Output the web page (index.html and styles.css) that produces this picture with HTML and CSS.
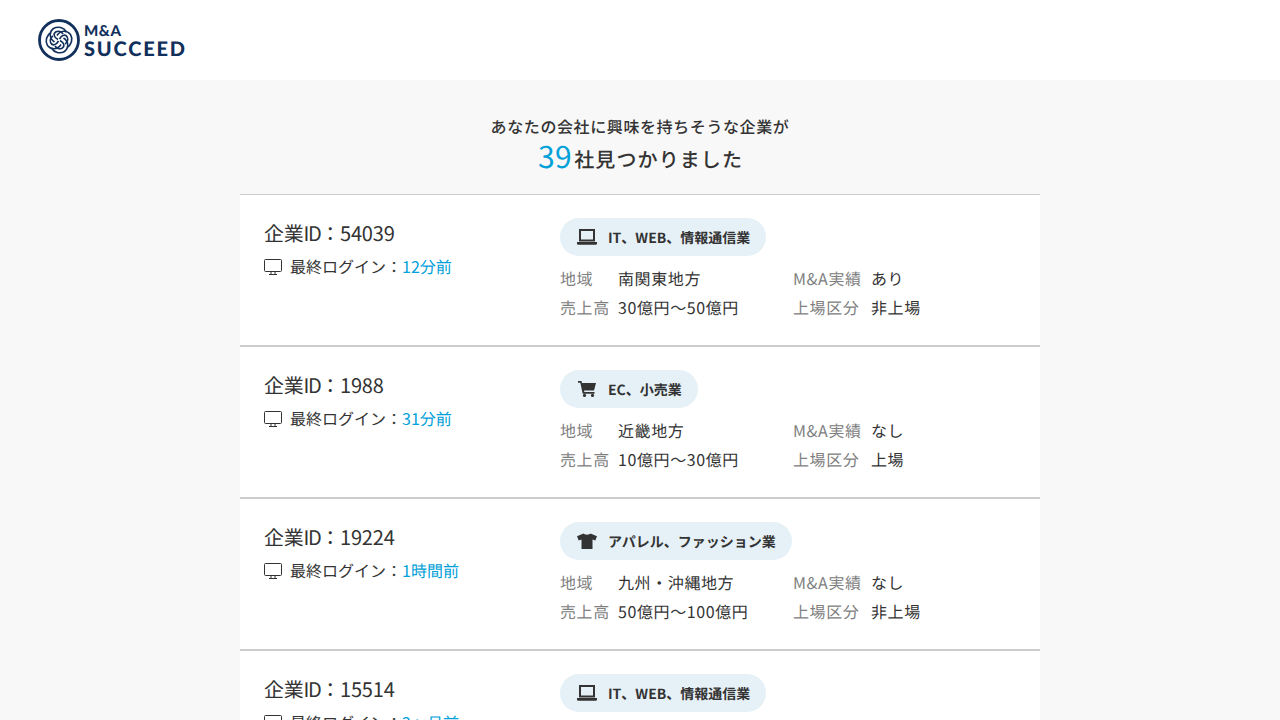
FILE: index.html
```html
<!DOCTYPE html>
<html lang="ja">
<head>
<meta charset="utf-8">
<title>M&amp;A SUCCEED</title>
<link rel="stylesheet" href="styles.css">
</head>
<body>
<svg class="sprites" width="0" height="0" aria-hidden="true">
  <symbol id="i-monitor" viewBox="0 0 18 16"><path d="M1.500.500h15a1 1 0 0 1 1 1v10a1 1 0 0 1-1 1h-15a1 1 0 0 1-1-1v-10a1 1 0 0 1 1-1zM7 12.500v2.500M11 12.500v2.500M5 15.500h8" fill="none" stroke="#333" stroke-width="1"/></symbol>
  <symbol id="i-laptop" viewBox="0 0 20 16"><path d="M3 1h14v10.500H3z" fill="none" stroke="#333" stroke-width="2"/><path d="M0 13h20v1.400a1.300 1.300 0 0 1-1.300 1.300H1.300A1.300 1.300 0 0 1 0 14.400z" fill="#333"/></symbol>
  <symbol id="i-cart" viewBox="0 0 20 16"><path d="M1 0h3.500l.5 2H19l-2 7.500H7l.4 1.500H17.500v1.800H5.700L3.300 1.800H1z" fill="#333"/><circle cx="7.500" cy="14.400" r="1.600" fill="#333"/><circle cx="15.500" cy="14.400" r="1.600" fill="#333"/></symbol>
  <symbol id="i-shirt" viewBox="0 0 20 16"><path d="M6.500 0.500C7.500 2 12.500 2 13.500 0.500L20 3.200 18.300 7.500 15.500 6.600V16H4.500V6.600L1.700 7.500 0 3.200z" fill="#333"/></symbol>
</svg>

<header class="site-header">
  <a class="logo" href="#">
    <svg class="logo-mark" width="44" height="44" viewBox="0 0 44 44" aria-hidden="true">
      <g fill="none" stroke="#12305c">
        <circle cx="22" cy="22" r="19.500" stroke-width="2.800"/>
        <g stroke-width="1.600">
          <g id="arm">
            <path d="M17.500 24C12 20.500 12 14 16.500 10.500C21 7.800 27 9.500 29.500 14"/>
            <path d="M21 21.500C16.500 19 16 15.500 19 13.800C21.500 12.600 24.500 13.400 26 16"/>
          </g>
          <use href="#arm" transform="rotate(90 22 22)"/>
          <use href="#arm" transform="rotate(180 22 22)"/>
          <use href="#arm" transform="rotate(270 22 22)"/>
        </g>
      </g>
    </svg>
    <span class="logo-text">
      <span class="logo-small">M&amp;A</span>
      <span class="logo-big">SUCCEED</span>
    </span>
  </a>
</header>

<main class="main">
  <div class="heading">
    <p class="heading-sub">あなたの会社に興味を持ちそうな企業が</p>
    <p class="heading-main"><span class="count">39</span>社見つかりました</p>
  </div>

  <section class="list">
    <article class="card">
      <div class="card-left">
        <h2 class="company">企業<span class="id">ID</span>：54039</h2>
        <p class="login"><svg class="login-icon"><use href="#i-monitor"/></svg>最終ログイン：<span class="accent">12分前</span></p>
      </div>
      <div class="card-right">
        <div class="tag"><svg class="tag-icon"><use href="#i-laptop"/></svg>IT、WEB、情報通信業</div>
        <dl class="facts">
          <dt>地域</dt><dd>南関東地方</dd><dt>M&amp;A実績</dt><dd>あり</dd>
          <dt>売上高</dt><dd>30億円〜50億円</dd><dt>上場区分</dt><dd>非上場</dd>
        </dl>
      </div>
    </article>

    <article class="card">
      <div class="card-left">
        <h2 class="company">企業<span class="id">ID</span>：1988</h2>
        <p class="login"><svg class="login-icon"><use href="#i-monitor"/></svg>最終ログイン：<span class="accent">31分前</span></p>
      </div>
      <div class="card-right">
        <div class="tag"><svg class="tag-icon"><use href="#i-cart"/></svg>EC、小売業</div>
        <dl class="facts">
          <dt>地域</dt><dd>近畿地方</dd><dt>M&amp;A実績</dt><dd>なし</dd>
          <dt>売上高</dt><dd>10億円〜30億円</dd><dt>上場区分</dt><dd>上場</dd>
        </dl>
      </div>
    </article>

    <article class="card">
      <div class="card-left">
        <h2 class="company">企業<span class="id">ID</span>：19224</h2>
        <p class="login"><svg class="login-icon"><use href="#i-monitor"/></svg>最終ログイン：<span class="accent">1時間前</span></p>
      </div>
      <div class="card-right">
        <div class="tag"><svg class="tag-icon"><use href="#i-shirt"/></svg>アパレル、ファッション業</div>
        <dl class="facts">
          <dt>地域</dt><dd>九州・沖縄地方</dd><dt>M&amp;A実績</dt><dd>なし</dd>
          <dt>売上高</dt><dd>50億円〜100億円</dd><dt>上場区分</dt><dd>非上場</dd>
        </dl>
      </div>
    </article>

    <article class="card">
      <div class="card-left">
        <h2 class="company">企業<span class="id">ID</span>：15514</h2>
        <p class="login"><svg class="login-icon"><use href="#i-monitor"/></svg>最終ログイン：<span class="accent">2ヶ月前</span></p>
      </div>
      <div class="card-right">
        <div class="tag"><svg class="tag-icon"><use href="#i-laptop"/></svg>IT、WEB、情報通信業</div>
      </div>
    </article>
  </section>
</main>
</body>
</html>
```

FILE: styles.css
```css
* { box-sizing: border-box; }
html, body { margin: 0; height: 720px; overflow: hidden; }
body {
  background: #f8f8f8;
  color: #333;
  font-family: "Noto Sans CJK JP", "Noto Sans", sans-serif;
  text-rendering: geometricPrecision;
}
.sprites { display: block; height: 0; }
.site-header { height: 80px; background: #fff; display: flex; align-items: center; padding-left: 37px; }
.logo { display: flex; align-items: center; gap: 3px; text-decoration: none; color: #12305c; }
.logo-mark { display: block; }
.logo-text { display: flex; flex-direction: column; font-family: Lato, sans-serif; font-weight: 900; padding-top: 2px; }
.logo-small { font-size: 15px; line-height: 17px; letter-spacing: .4px; }
.logo-big { font-size: 20px; line-height: 19px; letter-spacing: 1.800px; }
.main { width: 800px; margin: 0 auto; }
.heading { height: 114px; padding-top: 34px; text-align: center; }
.heading p { margin: 0; }
.heading-sub { font-size: 16px; line-height: 24px; font-weight: 500; letter-spacing: .6px; }
.heading .heading-main { margin-top: 1px; font-size: 20px; line-height: 32px; font-weight: 500; letter-spacing: 1.100px; padding-left: 1px; }
.count { font-size: 30px; font-weight: 400; color: #00a0d9; letter-spacing: .5px; margin-right: 2px; vertical-align: -1px; }
.list { border-top: 1px solid #ccc; }
.card { display: flex; height: 152px; background: #fff; border-bottom: 2px solid #ccc; padding: 24px 0 0 24px; }
.card-left { width: 296px; }
.company { margin: -1px 0 0; font-size: 20px; line-height: 30px; font-weight: 400; letter-spacing: -.2px; }
.id { letter-spacing: -1.500px; }
.login { margin: 6px 0 0; font-size: 16px; line-height: 24px; display: flex; align-items: center; }
.login-icon { width: 18px; height: 16px; margin: 1px 8px 0 0; }
.accent { color: #00a0d9; }
.card-right { flex: 1; }
.tag {
  display: inline-flex; align-items: center; height: 38px; margin-top: -1px; padding: 2px 16px 0 17px;
  border-radius: 19px; background: #e6f1f7; font-size: 14px; font-weight: 700;
}
.tag-icon { width: 20px; height: 16px; margin: -2px 11px 0 0; }
.facts {
  display: grid; grid-template-columns: 58px 175px 78px 1fr; margin: 8px 0 0;
  font-size: 16px; line-height: 29px; letter-spacing: .6px;
}
.facts dt { color: #808080; white-space: nowrap; }
.facts dd { margin: 0; white-space: nowrap; }
```
